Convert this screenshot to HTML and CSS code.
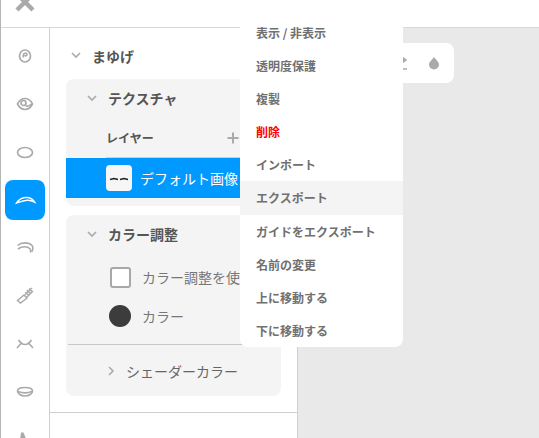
FILE: index.html
```html
<!DOCTYPE html>
<html lang="ja">
<head>
    <meta charset="UTF-8">
    <meta name="viewport" content="width=device-width, initial-scale=1.0">
    <title>まゆげ</title>
    <link rel="stylesheet" href="styles.css">
</head>
<body>
    <div class="topbar">
        <svg class="close-icon" width="24" height="12" viewBox="0 0 24 12"><path d="M4 -6 L20 10 M20 -6 L4 10" stroke="#aaa" stroke-width="4.4" fill="none"/></svg>
    </div>

    <div class="main">
        <div class="sidebar">
            <div class="side-btn">
                <svg width="24" height="24" viewBox="0 0 24 24" fill="none" stroke="#aaa" stroke-width="1.7"><ellipse cx="12" cy="12" rx="5.500" ry="6"/><path d="M10.500 13.500c-.8-2.500.3-4.500 2-4.500 1.500 0 2 1.800.8 2.600-.8.500-1.500.1-1.600-.5"/></svg>
            </div>
            <div class="side-btn">
                <svg width="24" height="24" viewBox="0 0 24 24" fill="none" stroke="#aaa" stroke-width="1.700"><path d="M4.500 12c2-3.800 4.800-5.500 7.500-5.500s5.500 1.700 7.500 5.500c-2 3.800-4.800 5.500-7.500 5.500s-5.500-1.700-7.500-5.500z"/><circle cx="10.500" cy="11" r="2.500"/><path d="M13 14c2 .5 4-.5 5.500-2"/></svg>
            </div>
            <div class="side-btn">
                <svg width="24" height="24" viewBox="0 0 24 24" fill="none" stroke="#aaa" stroke-width="1.700"><ellipse cx="12" cy="12.500" rx="7.500" ry="5"/></svg>
            </div>
            <div class="side-btn active">
                <svg width="24" height="24" viewBox="0 0 24 24" fill="none" stroke="#fff" stroke-width="1.500"><path d="M3.500 15c2-4 7-6 11-5.500 3 .4 5.500 2 7 4.500-3-1.500-6-2-9-1.500-3 .4-6 1.500-9 2.500z"/></svg>
            </div>
            <div class="side-btn">
                <svg width="24" height="24" viewBox="0 0 24 24" fill="none" stroke="#aaa" stroke-width="1.600"><path d="M4.500 9.500c4-3.500 11-3.500 14.500 0 1.200 1.500 1 4-.3 6.500"/><path d="M5 13c4-3 9.500-2.800 12-.2 .9 1 .9 2 .4 3.700"/></svg>
            </div>
            <div class="side-btn">
                <svg width="24" height="24" viewBox="0 0 24 24" fill="none" stroke="#aaa" stroke-width="1.500"><path d="M4.500 16.500l6.500-5.500 3 3-6.500 5z"/><path d="M12 10.500l7-6.500M14 13l6-6M14 6l3 3M16 4.500l3 3M12.500 8l3 3"/></svg>
            </div>
            <div class="side-btn">
                <svg width="24" height="24" viewBox="0 0 24 24" fill="none" stroke="#aaa" stroke-width="1.600"><path d="M5.500 8c2 3 4 4.500 6.500 4.500s4.500-1.500 6.500-4.500"/><path d="M8 11.500l-4 4.500M16 11.500l4 4.500"/></svg>
            </div>
            <div class="side-btn">
                <svg width="24" height="24" viewBox="0 0 24 24" fill="none" stroke="#aaa" stroke-width="1.700"><path d="M4.500 11c0-2.500 4-3.500 7.500-3.500s7.500 1 7.500 3.500-3.500 5-7.500 5-7.500-2.500-7.500-5z"/><path d="M5 11.500c4 1.500 10 1.500 14 0"/></svg>
            </div>
            <div class="side-btn">
                <svg width="24" height="24" viewBox="0 0 24 24" fill="#aaa"><path d="M8 4.500h2.500l3 7.500H7z"/></svg>
            </div>
        </div>

        <div class="panel">
            <div class="panel-title">
                <svg class="chev" width="12" height="12" viewBox="0 0 12 12"><path d="M2 4l4 4 4-4" stroke="#aaa" stroke-width="1.600" fill="none"/></svg>
                <span>まゆげ</span>
            </div>

            <div class="card card-texture">
                <div class="card-head">
                    <svg class="chev" width="12" height="12" viewBox="0 0 12 12"><path d="M2 4l4 4 4-4" stroke="#aaa" stroke-width="1.600" fill="none"/></svg>
                    <span>テクスチャ</span>
                </div>
                <div class="layer-head">
                    <span>レイヤー</span>
                    <svg width="12" height="12" viewBox="0 0 12 12"><path d="M6 .5v11M.5 6h11" stroke="#aaa" stroke-width="2" fill="none"/></svg>
                </div>
                <div class="layer-row">
                    <div class="thumb">
                        <svg width="26" height="26" viewBox="0 0 26 26"><path d="M4 14.500l4-1 4 1M14 14.500l4-1 4 1" stroke="#222" stroke-width="1.400" fill="none"/></svg>
                    </div>
                    <span class="layer-name">デフォルト画像</span>
                </div>
            </div>

            <div class="card card-color">
                <div class="card-head">
                    <svg class="chev" width="12" height="12" viewBox="0 0 12 12"><path d="M2 4l4 4 4-4" stroke="#aaa" stroke-width="1.600" fill="none"/></svg>
                    <span>カラー調整</span>
                </div>
                <div class="opt-row">
                    <div class="checkbox"></div>
                    <span>カラー調整を使用</span>
                </div>
                <div class="opt-row color-row">
                    <div class="swatch"></div>
                    <span>カラー</span>
                </div>
                <div class="shader-row">
                    <svg width="12" height="12" viewBox="0 0 12 12"><path d="M4 2l4 4-4 4" stroke="#aaa" stroke-width="1.600" fill="none"/></svg>
                    <span>シェーダーカラー</span>
                </div>
            </div>

            <div class="panel-foot"></div>
        </div>

        <div class="canvas">
            <div class="toolbar">
                <svg width="18" height="20" viewBox="0 0 18 20"><path d="M10 1L18.500 7 10 13z" fill="#aaa"/><path d="M8 16h10" stroke="#aaa" stroke-width="1.500"/></svg>
                <svg width="14" height="18" viewBox="0 0 14 18"><path d="M7 3c2 3 5 5 5 7.500a5 5 0 0 1-10 0c0-2.500 3-4.500 5-7.500z" fill="#aaa"/></svg>
            </div>
        </div>
    </div>

    <ul class="menu">
        <li>表示 / 非表示</li>
        <li>透明度保護</li>
        <li>複製</li>
        <li class="danger">削除</li>
        <li>インポート</li>
        <li class="hover">エクスポート</li>
        <li>ガイドをエクスポート</li>
        <li>名前の変更</li>
        <li>上に移動する</li>
        <li>下に移動する</li>
    </ul>
</body>
</html>
```

FILE: styles.css
```css
/* General */
html, body {
    height: 100%;
}

body {
    margin: 0;
    font-family: "Noto Sans CJK JP", "Noto Sans", sans-serif;
    color: #666;
    background: #fff;
    overflow: hidden;
    display: flex;
    flex-direction: column;
    border-left: 1px solid #b5b5b5;
    box-sizing: border-box;
}

.topbar {
    height: 27px;
    flex: none;
    border-bottom: 1px solid #d8d8d8;
}

.close-icon {
    display: block;
    margin-left: 12px;
}

.main {
    flex: 1;
    display: flex;
    min-height: 0;
}

/* Sidebar */
.sidebar {
    width: 48px;
    flex: none;
    border-right: 1px solid #d0d0d0;
    padding-top: 8px;
    display: flex;
    flex-direction: column;
    align-items: center;
    gap: 8px;
    overflow: hidden;
}

.side-btn {
    width: 40px;
    height: 40px;
    flex: none;
    border-radius: 8px;
    display: flex;
    align-items: center;
    justify-content: center;
}

.side-btn.active {
    background: #0099ff;
}

/* Panel */
.panel {
    width: 247px;
    flex: none;
    border-right: 1px solid #d0d0d0;
    overflow: hidden;
}

.panel-title {
    height: 51px;
    box-sizing: border-box;
    padding: 18px 0 0 20px;
    display: flex;
    align-items: flex-start;
    gap: 10px;
    font-size: 14px;
    line-height: 20px;
    font-weight: 700;
    color: #555;
}

.panel-title .chev {
    margin-top: 3px;
}

.card {
    margin-left: 16px;
    width: 215px;
    background: #f4f4f4;
    border-radius: 8px;
    overflow: hidden;
}

.card-texture {
    height: 127px;
}

.card-color {
    height: 181px;
    margin-top: 9px;
}

.card-head {
    height: 39px;
    box-sizing: border-box;
    padding-bottom: 2px;
    display: flex;
    align-items: center;
    padding-left: 20px;
    gap: 10px;
    font-size: 14px;
    font-weight: 700;
    color: #555;
}

.layer-head {
    margin-left: 40px;
    height: 40px;
    box-sizing: border-box;
    border-bottom: 1px solid #d0d0d0;
    display: flex;
    align-items: center;
    justify-content: space-between;
    padding-right: 42px;
    font-size: 12px;
    font-weight: 700;
    color: #555;
}

.layer-row {
    height: 40px;
    background: #0099ff;
    padding-left: 40px;
    display: flex;
    align-items: center;
    gap: 8px;
    white-space: nowrap;
}

.thumb {
    width: 26px;
    height: 26px;
    flex: none;
    background: #f6f6f6;
    border-radius: 4px;
}

.thumb svg {
    display: block;
}

.layer-name {
    font-size: 14px;
    color: #fff;
}

.opt-row {
    height: 40px;
    margin-top: 3px;
    padding-left: 44px;
    display: flex;
    align-items: center;
    gap: 11px;
    font-size: 14px;
    color: #777;
    white-space: nowrap;
}

.color-row {
    margin-top: 0;
    height: 38px;
    padding-left: 43px;
}

.checkbox {
    width: 17px;
    height: 17px;
    flex: none;
    background: #fff;
    border: 2px solid #a8a8a8;
    border-radius: 3px;
}

.swatch {
    width: 22px;
    height: 22px;
    flex: none;
    background: #3c3c3c;
    border-radius: 50%;
}

.shader-row {
    margin: 9px 0 0 2px;
    border-top: 1px solid #c8c8c8;
    height: 52px;
    box-sizing: border-box;
    padding-left: 37px;
    display: flex;
    align-items: center;
    gap: 9px;
    font-size: 14px;
    color: #666;
}

.panel-foot {
    margin-top: 16px;
    border-top: 1px solid #d0d0d0;
}

/* Canvas */
.canvas {
    flex: 1;
    background: #e9e9e9;
    position: relative;
}

.toolbar {
    position: absolute;
    top: 15px;
    left: 20px;
    right: 85px;
    height: 40px;
    background: #fff;
    border-radius: 8px;
    display: flex;
    align-items: center;
    justify-content: flex-end;
    gap: 20px;
    padding-right: 13px;
}

/* Context menu */
.menu {
    position: absolute;
    top: 16px;
    left: 240px;
    width: 163px;
    margin: 0;
    padding: 0;
    list-style: none;
    background: #fff;
    border-radius: 8px;
    overflow: hidden;
}

.menu li {
    height: 33.1px;
    line-height: 33px;
    padding-left: 16px;
    font-size: 12px;
    font-weight: 700;
    color: #707070;
}

.menu li.danger {
    color: #f00;
}

.menu li.hover {
    background: #f4f4f4;
}
```
